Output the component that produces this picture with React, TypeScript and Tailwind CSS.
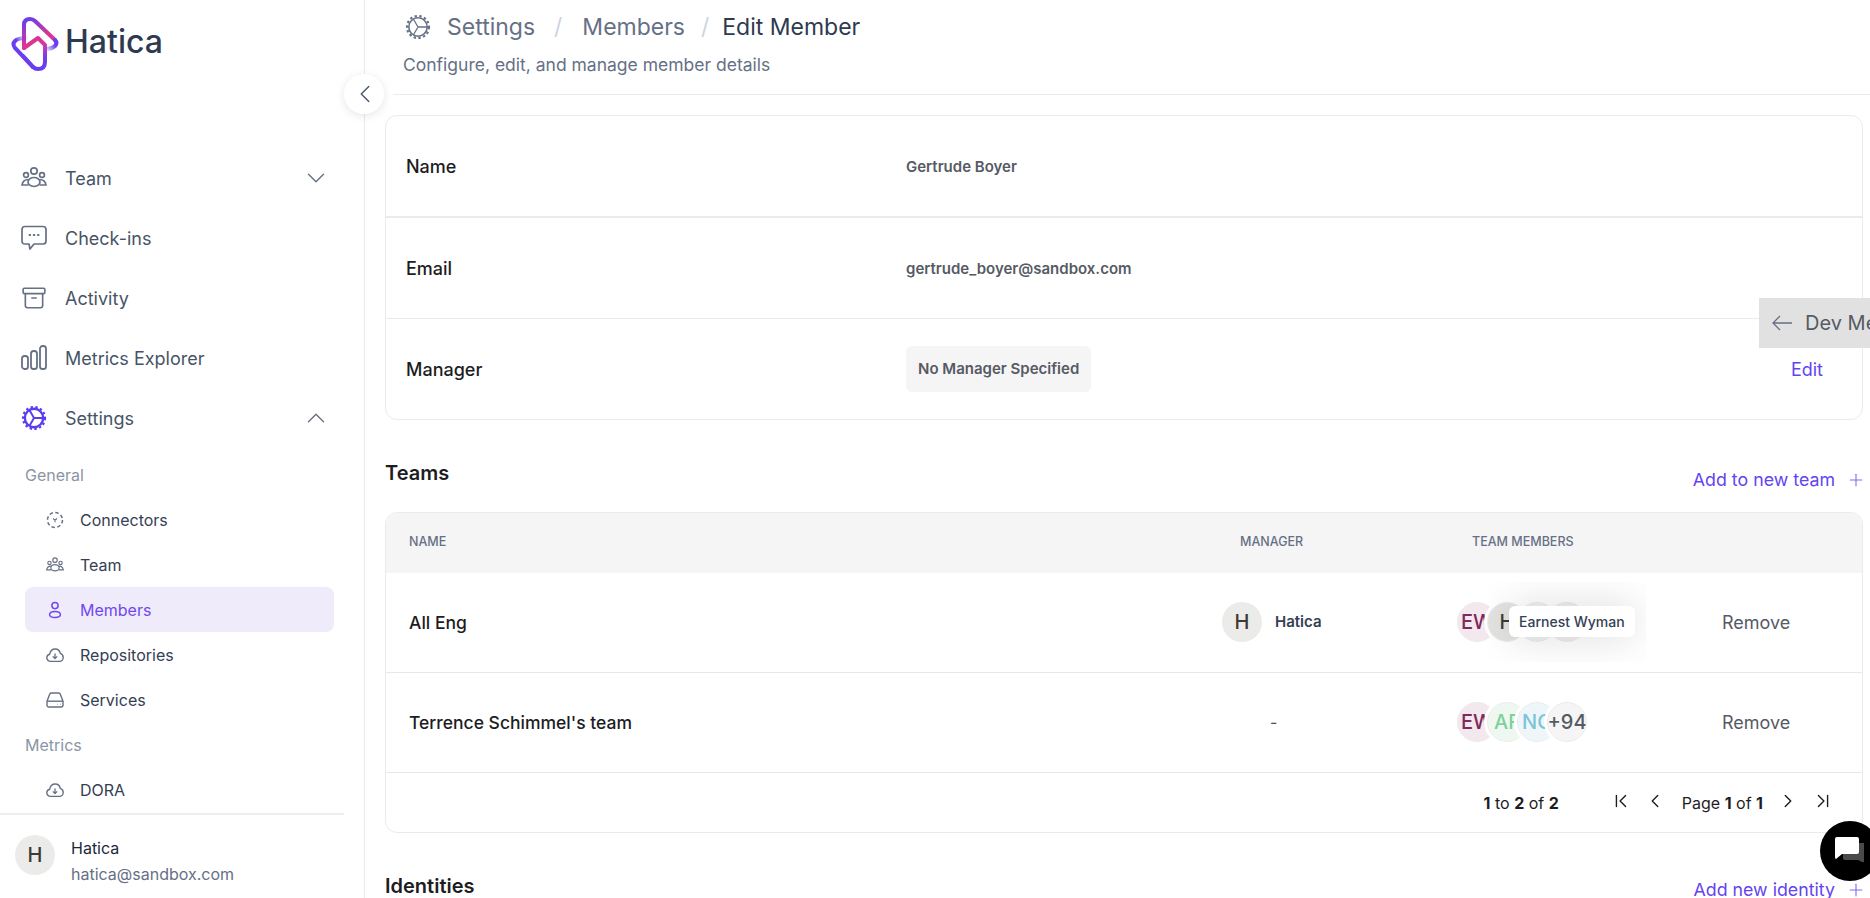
import { Archive, ChevronDown, ChevronFirst, ChevronLast, ChevronLeft, ChevronRight, ChevronUp, Plus } from "lucide-react";

function HaticaLogo() {
  return (
    <svg width="65" height="65" viewBox="0 0 65 65" fill="none">
      <defs>
        <linearGradient id="fadeRight" x1="52" y1="30" x2="40" y2="40" gradientUnits="userSpaceOnUse">
          <stop offset="0.3" stopColor="#6a3df0" />
          <stop offset="1" stopColor="#6a3df0" stopOpacity="0.1" />
        </linearGradient>
        <linearGradient id="fadeLeft" x1="9" y1="35" x2="21" y2="28" gradientUnits="userSpaceOnUse">
          <stop offset="0.3" stopColor="#6a3df0" />
          <stop offset="1" stopColor="#6a3df0" stopOpacity="0.1" />
        </linearGradient>
        <linearGradient id="pink" x1="19" y1="10" x2="40" y2="58" gradientUnits="userSpaceOnUse">
          <stop offset="0" stopColor="#6a3df0" />
          <stop offset="0.45" stopColor="#e0348f" />
          <stop offset="0.62" stopColor="#c43ab0" />
          <stop offset="0.85" stopColor="#6a3df0" />
        </linearGradient>
      </defs>
      <path d="M19 38 V15 Q19 9 25 9 Q28 9 30 11 L50 30" stroke="url(#pink)" strokeWidth="4" strokeLinecap="round" />
      <path d="M50 30 Q53 33 50 36 Q47 39 40 39" stroke="url(#fadeRight)" strokeWidth="4" strokeLinecap="round" />
      <path d="M19 38 L33 28 L40 35 V52 Q40 59 33 59 Q30 59 28 57" stroke="url(#pink)" strokeWidth="4" strokeLinecap="round" strokeLinejoin="round" />
      <path d="M28 57 L10 38 Q7 34 10 31 Q13 28 21 28" stroke="url(#fadeLeft)" strokeWidth="4" strokeLinecap="round" />
      <path d="M28 57 L18 46" stroke="#6a3df0" strokeWidth="4" strokeLinecap="round" />
    </svg>
  );
}

function TeamIcon({ size = 26 }: { size?: number }) {
  return (
    <svg width={size} height={size} viewBox="0 0 26 26" fill="none" stroke="currentColor" strokeWidth="1.7">
      <circle cx="13" cy="6" r="3.2" />
      <circle cx="5" cy="10" r="2.4" />
      <circle cx="21" cy="10" r="2.4" />
      <ellipse cx="13" cy="17" rx="6" ry="4.5" />
      <path d="M7.5 14.5 C4 14.5 1.5 16.5 1 20 H7.5" />
      <path d="M18.5 14.5 C22 14.5 24.5 16.5 25 20 H18.5" />
    </svg>
  );
}

function ChatIcon() {
  return (
    <svg width="26" height="26" viewBox="0 0 26 26" fill="none" stroke="currentColor" strokeWidth="1.7" strokeLinejoin="round">
      <path d="M4 1.5 H22 Q25 1.5 25 4.5 V16 Q25 19 22 19 H13 L9 24 L8 19 H4 Q1 19 1 16 V4.5 Q1 1.5 4 1.5 Z" />
      <path d="M8.5 10 H9.2 M12.7 10 H13.4 M16.9 10 H17.6" strokeLinecap="round" strokeWidth="1.9" />
    </svg>
  );
}

function BarsIcon() {
  return (
    <svg width="26" height="26" viewBox="0 0 26 26" fill="none" stroke="currentColor" strokeWidth="1.8">
      <rect x="1" y="11" width="6" height="13" rx="2.6" />
      <rect x="10" y="6" width="6" height="18" rx="2.6" />
      <rect x="19" y="1" width="6" height="23" rx="2.6" />
    </svg>
  );
}

function GearIcon({ size = 26, strokeWidth = 2.4 }: { size?: number; strokeWidth?: number }) {
  return (
    <svg width={size} height={size} viewBox="0 0 26 26" fill="none" stroke="currentColor">
      <circle cx="13" cy="13" r="9.2" strokeWidth={strokeWidth} />
      <circle cx="13" cy="13" r="11" strokeWidth="2.2" strokeDasharray="2.4 2.4" />
      <path d="M13 13 H22 M13 13 L8.5 5.2 M13 13 L8.5 20.8" strokeWidth={strokeWidth * 0.8} />
    </svg>
  );
}

function ConnectorIcon() {
  return (
    <svg width="18" height="18" viewBox="0 0 18 18" fill="none" stroke="currentColor" strokeWidth="1.5">
      <circle cx="9" cy="9" r="7.5" strokeDasharray="3.5 2.4" />
      <path d="M7 7.5 L9 9.2 L11 7.5 M9 9.2 V11.2" strokeWidth="1.1" />
    </svg>
  );
}

function MemberIcon() {
  return (
    <svg width="18" height="18" viewBox="0 0 18 18" fill="none" stroke="currentColor" strokeWidth="1.5">
      <circle cx="9" cy="4.6" r="3.1" />
      <path d="M3.6 13.6 C3.6 11.4 6 10.4 9 10.4 C12 10.4 14.4 11.4 14.4 13.6 C14.4 15.8 12 16.6 9 16.6 C6 16.6 3.6 15.8 3.6 13.6 Z" />
    </svg>
  );
}

function CloudIcon() {
  return (
    <svg width="18" height="18" viewBox="0 0 18 18" fill="none" stroke="currentColor" strokeWidth="1.4" strokeLinejoin="round">
      <path d="M4.6 15.4 C2.4 15.4 0.8 13.8 0.8 11.8 C0.8 10 2 8.6 3.7 8.2 C4.2 5.4 6.4 3 9.2 3 C11.8 3 13.8 4.8 14.3 7.4 C16 7.9 17.2 9.6 17.2 11.4 C17.2 13.6 15.6 15.4 13.4 15.4 Z" />
      <path d="M9 7.6 V12.4 M6.8 10.4 L9 12.6 L11.2 10.4" strokeWidth="1.3" />
    </svg>
  );
}

function DriveIcon() {
  return (
    <svg width="18" height="18" viewBox="0 0 18 18" fill="none" stroke="currentColor" strokeWidth="1.4" strokeLinejoin="round">
      <path d="M1 10.2 L3.8 3 Q4.2 2 5.4 2 H12.6 Q13.8 2 14.2 3 L17 10.2 V14 Q17 16 15 16 H3 Q1 16 1 14 Z" />
      <path d="M1 10.2 H17" />
      <path d="M11.5 13.2 H12 M14 13.2 H14.5" strokeWidth="1.1" />
    </svg>
  );
}

function NavItem({ icon, label, chevron, active }: { icon: React.ReactNode; label: string; chevron?: "up" | "down"; active?: boolean }) {
  return (
    <div className="flex h-[60px] items-center pl-[21px] pr-[33px]">
      <span className={`flex w-[26px] shrink-0 justify-center ${active ? "text-[#5b3df0]" : "text-[#667085]"}`}>{icon}</span>
      <span className="ml-[18px] flex-1 text-[18px] text-[#475467]">{label}</span>
      {chevron === "down" && <ChevronDown size={30} strokeWidth={1.1} className="text-[#667085]" />}
      {chevron === "up" && <ChevronUp size={30} strokeWidth={1.1} className="text-[#667085]" />}
    </div>
  );
}

function SubItem({ icon, label, active }: { icon: React.ReactNode; label: string; active?: boolean }) {
  return (
    <div className={`ml-[25px] mr-[30px] flex h-[45px] items-center gap-4 rounded-lg pl-[21px] text-[16px] ${active ? "bg-[#efebfb] text-[#7048f0]" : "text-[#344054]"}`}>
      <span className={active ? "text-[#7048f0]" : "text-[#667085]"}>{icon}</span>
      {label}
    </div>
  );
}

function Sidebar() {
  return (
    <aside className="flex h-full w-[365px] shrink-0 flex-col border-r border-[#ebebeb] bg-white">
      <div className="flex h-[148px] shrink-0 items-start pl-[5px] pt-[10px]">
        <HaticaLogo />
        <span className="ml-[-5px] mt-[7px] text-[32px] font-medium leading-[50px] text-[#2e3a50]">Hatica</span>
      </div>
      <nav className="min-h-0 flex-1 overflow-hidden">
        <NavItem icon={<TeamIcon />} label="Team" chevron="down" />
        <NavItem icon={<ChatIcon />} label="Check-ins" />
        <NavItem icon={<Archive size={28} strokeWidth={1.5} />} label="Activity" />
        <NavItem icon={<BarsIcon />} label="Metrics Explorer" />
        <NavItem icon={<GearIcon />} label="Settings" chevron="up" active />
        <div className="flex h-[49px] items-center pl-[25px] pt-[4px] text-[16px] text-[#8b95a5]">General</div>
        <SubItem icon={<ConnectorIcon />} label="Connectors" />
        <SubItem icon={<TeamIcon size={18} />} label="Team" />
        <SubItem icon={<MemberIcon />} label="Members" active />
        <SubItem icon={<CloudIcon />} label="Repositories" />
        <SubItem icon={<DriveIcon />} label="Services" />
        <div className="flex h-[45px] items-center pl-[25px] text-[16px] text-[#8b95a5]">Metrics</div>
        <SubItem icon={<CloudIcon />} label="DORA" />
      </nav>
      <div className="flex h-[85px] w-[344px] shrink-0 items-center border-t-2 border-[#eeeef2] pb-[3px] pl-[15px]">
        <Avatar text="H" bg="bg-[#ebebe9]" color="text-[#3d3a36]" />
        <div className="ml-4 mt-[12px]">
          <div className="text-[16px] leading-[26px] text-[#1d2939]">Hatica</div>
          <div className="text-[16px] leading-[26px] text-[#667085]">hatica@sandbox.com</div>
        </div>
      </div>
    </aside>
  );
}

function Avatar({ text, bg, color }: { text: string; bg: string; color: string }) {
  return (
    <div className={`flex h-10 w-10 shrink-0 items-center justify-center overflow-hidden rounded-full text-[20px] font-medium ${bg} ${color}`}>
      {text}
    </div>
  );
}

function GroupAvatar({ text, bg, color, first }: { text: string; bg: string; color: string; first?: boolean }) {
  return (
    <div className={`flex h-10 w-10 shrink-0 items-center justify-center overflow-hidden whitespace-nowrap rounded-full border border-[#ececec] text-[20px] font-medium ${first ? "" : "ml-[-10px] ring-[3px] ring-white"} ${bg} ${color}`}>
      {text}
    </div>
  );
}

function InfoRow({ label, children, height, right }: { label: string; children: React.ReactNode; height: string; right?: React.ReactNode }) {
  return (
    <div className={`flex items-center pl-5 pr-[39px] ${height}`}>
      <div className="w-[500px] text-[18px] font-medium text-[#1d1d1f]">{label}</div>
      <div className="flex-1">{children}</div>
      {right}
    </div>
  );
}

function TeamRow({ name, manager, avatars, hovered }: { name: string; manager?: boolean; avatars: { text: string; bg: string; color: string }[]; hovered?: boolean }) {
  return (
    <div className="grid h-[100px] grid-cols-[836px_235px_265px_1fr] items-center border-b border-[#e8e8e8]">
      <div className="pl-[23px] pt-[2px] text-[17.5px] font-medium text-[#1d1d1f]">{name}</div>
      {manager ? (
        <div className="flex items-center gap-[13px]">
          <Avatar text="H" bg="bg-[#ebebe9]" color="text-[#3d3a36]" />
          <span className="text-[15px] font-semibold text-[#344054]">Hatica</span>
        </div>
      ) : (
        <div className="pl-[48px] text-[16px] text-[#475467]">-</div>
      )}
      <div className="relative flex items-center">
        {avatars.map((a, i) => (
          <GroupAvatar key={i} first={i === 0} {...a} />
        ))}
        {hovered && (
          <div className="absolute left-[30px] top-[-20px] h-[80px] w-[159px] overflow-hidden">
            <div className="absolute left-[22px] top-[24px] whitespace-nowrap rounded-md bg-white px-[10px] py-[5px] text-[14px] font-medium text-[#344054] shadow-[0_0_40px_rgba(0,0,0,0.15)]">
              Earnest Wyman
            </div>
          </div>
        )}
      </div>
      <div className="text-[18px] text-[#555a64]">Remove</div>
    </div>
  );
}

function AddLink({ label }: { label: string }) {
  return (
    <div className="flex items-center gap-[11px] text-[17.8px] text-[#6344f0]">
      {label}
      <Plus size={20} strokeWidth={1.3} className="mr-[-3px] text-[#8466f3]" />
    </div>
  );
}

export default function App() {
  return (
    <div className="relative flex h-[898px] w-full overflow-hidden bg-white [font-family:Inter,sans-serif]">
      <Sidebar />

      <div className="absolute left-[344px] top-[74px] flex h-10 w-10 items-center justify-center rounded-full bg-white shadow-[0_2px_10px_rgba(0,0,0,0.1)]">
        <ChevronLeft size={30} strokeWidth={1.1} className="ml-[2px] text-[#475467]" />
      </div>

      <main className="min-w-0 flex-1 overflow-hidden pl-5 pr-[7px]">
        <header className="ml-2 mr-[-7px] flex h-[95px] flex-col border-b border-[#ebebeb]">
          <div className="flex h-[54px] items-center pl-[12px] text-[23px] text-[#667085]">
            <GearIcon size={26} strokeWidth={1.6} />
            <span className="ml-[16px]">Settings</span>
            <span className="ml-[19px] text-[#cbd5e1]">/</span>
            <span className="ml-[20px]">Members</span>
            <span className="ml-[16px] text-[#cbd5e1]">/</span>
            <span className="ml-[13px] text-[#2e3a50]">Edit Member</span>
          </div>
          <div className="pl-[10px] text-[17.5px] leading-[22px] text-[#667085]">Configure, edit, and manage member details</div>
        </header>

        <section className="mt-5 overflow-hidden rounded-xl border border-[#ebebeb]">
          <div className="border-b-2 border-[#ebebeb]">
            <InfoRow label="Name" height="h-[100px]">
              <span className="text-[15px] font-semibold text-[#555a64]">Gertrude Boyer</span>
            </InfoRow>
          </div>
          <div className="border-b border-[#ebebeb]">
            <InfoRow label="Email" height="h-[100px]">
              <span className="text-[15px] font-semibold text-[#555a64]">gertrude_boyer@sandbox.com</span>
            </InfoRow>
          </div>
          <InfoRow label="Manager" height="h-[100px]" right={<span className="text-[18px] text-[#6344f0]">Edit</span>}>
            <span className="inline-block rounded-md bg-[#f5f5f5] px-3 py-[12px] text-[15px] font-semibold leading-[22px] text-[#555a64]">No Manager Specified</span>
          </InfoRow>
        </section>

        <div className="mt-[37px] flex items-start justify-between">
          <h2 className="text-[20px] font-semibold leading-[32px] text-[#1d1d1f]">Teams</h2>
          <div className="mt-[10px]">
            <AddLink label="Add to new team" />
          </div>
        </div>

        <section className="mt-[18px] overflow-hidden rounded-xl border border-[#ebebeb]">
          <div className="grid h-[60px] grid-cols-[836px_235px_265px_1fr] items-center bg-[#f5f5f5] text-[12.5px] font-medium text-[#667085]">
            <div className="pl-[23px]">NAME</div>
            <div className="pl-[18px]">MANAGER</div>
            <div className="pl-[15px]">TEAM MEMBERS</div>
          </div>
          <TeamRow
            name="All Eng"
            manager
            hovered
            avatars={[
              { text: "EW", bg: "bg-[#f3e8ee]", color: "text-[#7d2a5c]" },
              { text: "H", bg: "bg-[#e3e3e1]", color: "text-[#3d3a36]" },
              { text: "AF", bg: "bg-[#eef3f1]", color: "text-[#7ed09a]" },
              { text: "+94", bg: "bg-[#f0f0f0]", color: "text-[#555a64]" },
            ]}
          />
          <TeamRow
            name="Terrence Schimmel's team"
            avatars={[
              { text: "EW", bg: "bg-[#f3e8ee]", color: "text-[#7d2a5c]" },
              { text: "AF", bg: "bg-[#eef8f1]", color: "text-[#7ed09a]" },
              { text: "NC", bg: "bg-[#eef6f9]", color: "text-[#7cc4d6]" },
              { text: "+94", bg: "bg-[#f5f5f5]", color: "text-[#555a64]" },
            ]}
          />
          <div className="flex h-[59px] items-center justify-end pr-[28px] pt-[2px] text-[16px] text-[#1d1d1f]">
            <span>
              <b className="font-bold">1</b> to <b className="font-bold">2</b> of <b className="font-bold">2</b>
            </span>
            <ChevronFirst size={22} strokeWidth={1.5} className="ml-[51px] mb-[4px]" />
            <ChevronLeft size={22} strokeWidth={1.5} className="ml-[12px] mb-[4px]" />
            <span className="ml-[16px]">
              Page <b className="font-bold">1</b> of <b className="font-bold">1</b>
            </span>
            <ChevronRight size={22} strokeWidth={1.5} className="ml-[14px] mb-[4px]" />
            <ChevronLast size={22} strokeWidth={1.5} className="ml-[13px] mb-[4px]" />
          </div>
        </section>

        <div className="mt-[37px] flex items-start justify-between">
          <h2 className="text-[20px] font-semibold leading-[32px] text-[#1d1d1f]">Identities</h2>
          <div className="mt-[7px]">
            <AddLink label="Add new identity" />
          </div>
        </div>
      </main>

      <div className="absolute left-[1759px] top-[298px] flex h-[50px] w-[111px] items-center overflow-hidden whitespace-nowrap bg-[#e1e1e1] pl-[13px] text-[20px] text-[#555a64]">
        <svg width="20" height="16" viewBox="0 0 20 16" fill="none" stroke="#667085" strokeWidth="1.3" className="shrink-0">
          <path d="M20 8 H1 M8 1 L1 8 L8 15" />
        </svg>
        <span className="ml-[13px]">Dev Metrics</span>
      </div>

      <div className="absolute left-[1820px] top-[821px] flex h-[60px] w-[60px] items-start justify-start rounded-full bg-black pl-[14px] pt-[14px]">
        <svg width="32" height="32" viewBox="0 0 32 32">
          <path d="M9 8 H30 V26 Q30 28 28 27 L24 25 H12 Q9 25 9 23 Z" fill="#4a4a4a" />
          <path d="M3 2 H23 Q25 2 25 4 V17 Q25 19 23 19 H8 L2 24 Q1 24 1 22 V4 Q1 2 3 2 Z" fill="#fff" />
        </svg>
      </div>
    </div>
  );
}
